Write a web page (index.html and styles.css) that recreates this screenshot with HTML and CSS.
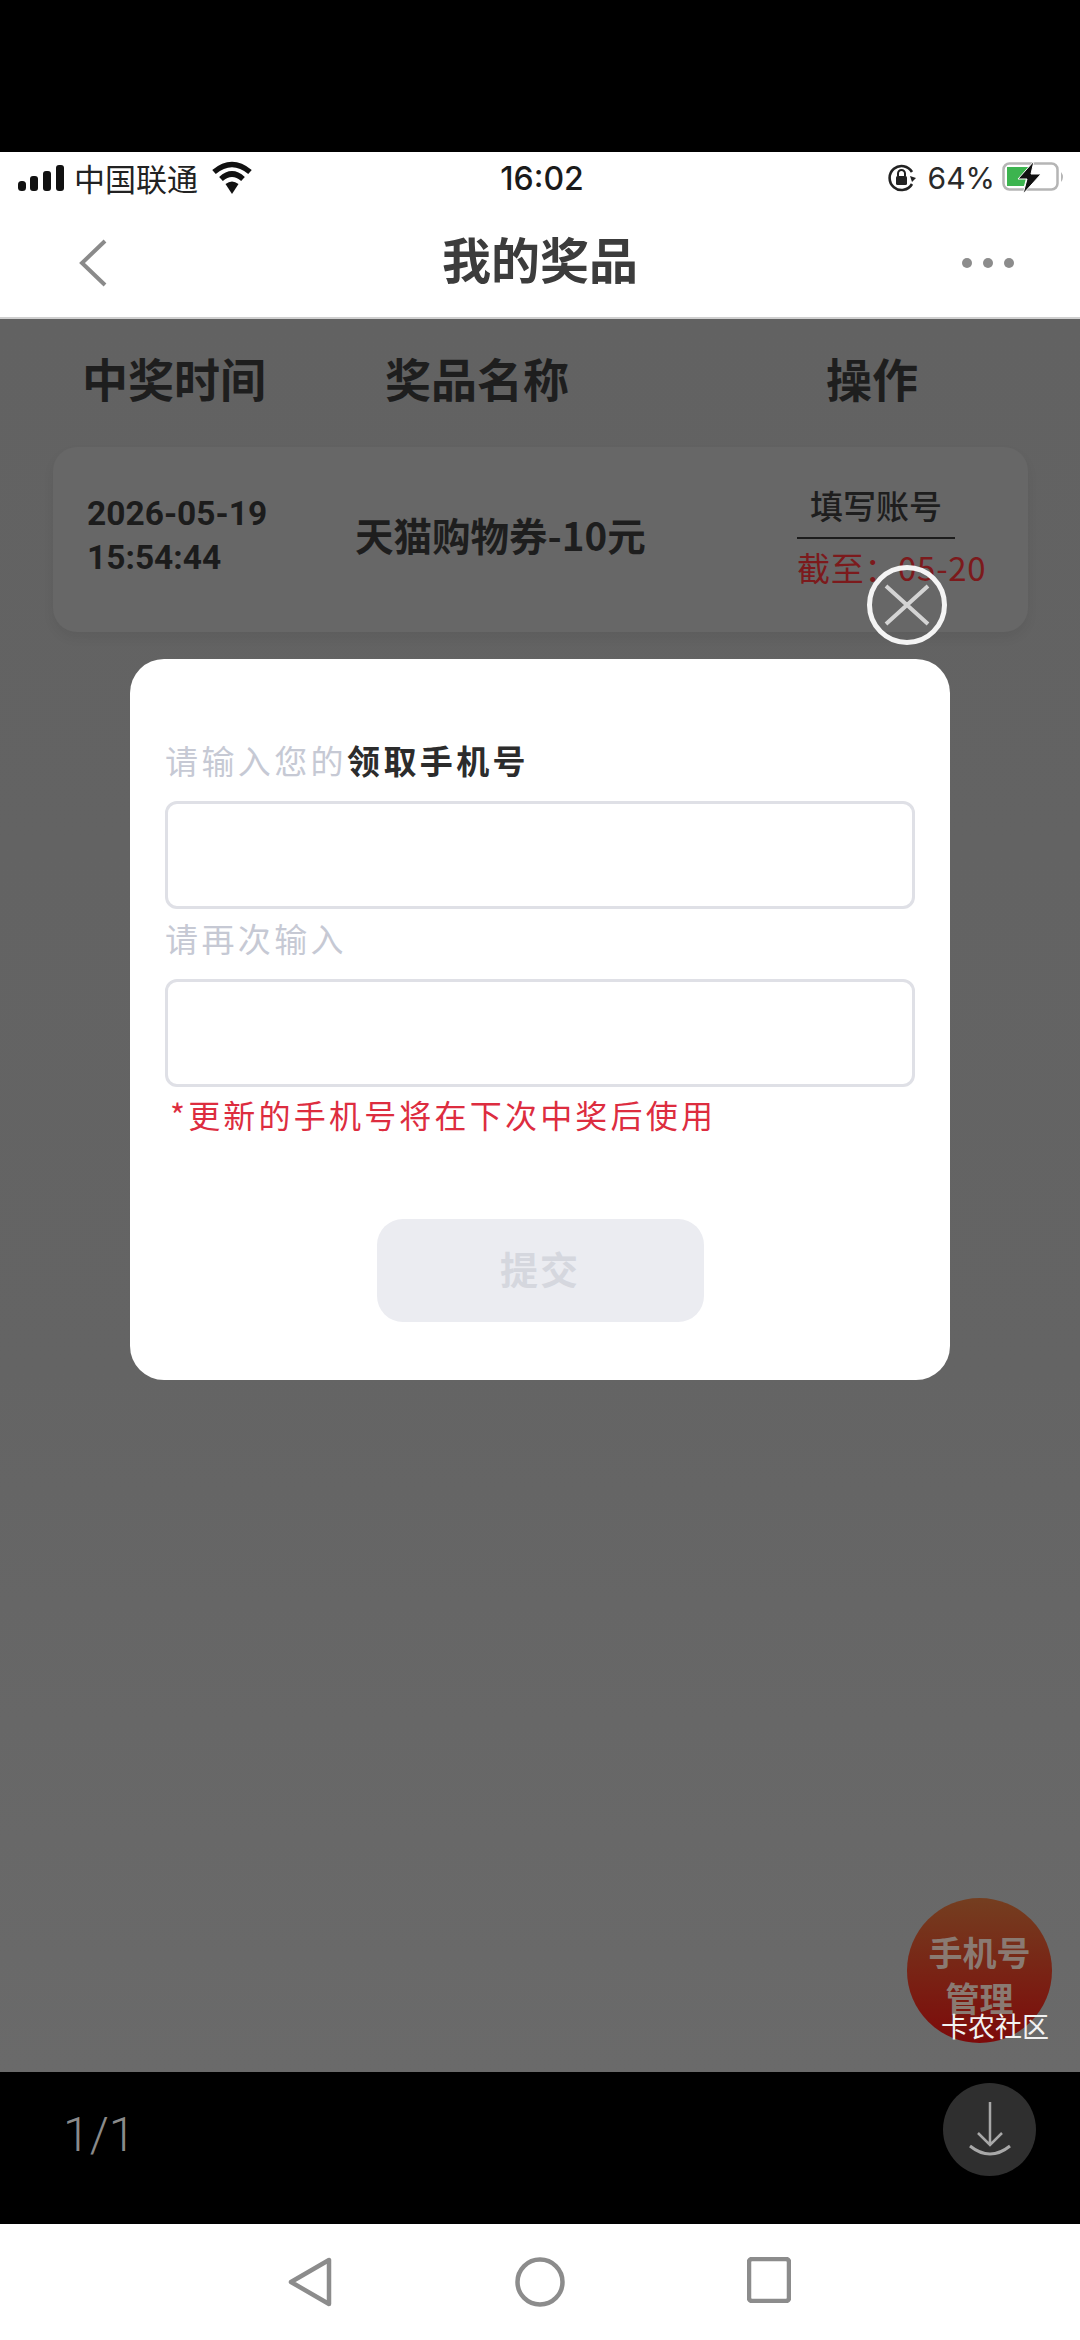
FILE: index.html
```html
<!DOCTYPE html>
<html>
	<head>
		<meta charset="UTF-8">
		<title>我的奖品</title>
		<link rel="stylesheet" href="styles.css">
	</head>
	<body>
		<div class="top_black"></div>

		<div class="status">
			<div class="status_left">
				<svg class="signal" width="46" height="26" viewBox="0 0 46 26">
					<rect x="0" y="16" width="8" height="10" rx="3.5" fill="#111"/>
					<rect x="12" y="11" width="8" height="15" rx="3" fill="#111"/>
					<rect x="25" y="6" width="8" height="20" rx="3" fill="#111"/>
					<rect x="38" y="0" width="8" height="26" rx="3" fill="#111"/>
				</svg>
				<span class="carrier">中国联通</span>
				<svg class="wifi" width="40" height="34" viewBox="0 0 40 34">
					<path d="M2 11 Q20 -4 38 11" fill="none" stroke="#111" stroke-width="5.5"/>
					<path d="M9 18 Q20 8 31 18" fill="none" stroke="#111" stroke-width="5.5"/>
					<path d="M13.5 23 Q20 18 26.500 23 L20 33 Z" fill="#111"/>
				</svg>
			</div>
			<div class="time">16:02</div>
			<div class="status_right">
				<svg class="lock" width="30" height="30" viewBox="0 0 30 30">
					<path d="M25 21 A12 12 0 1 1 25 9" fill="none" stroke="#222" stroke-width="2.6"/>
					<path d="M23 13 L29 15 L25 19 Z" fill="#222"/>
					<rect x="9" y="13" width="11" height="9" rx="1.500" fill="#222"/>
					<path d="M11 13 V10.500 A3.500 3.500 0 0 1 18 10.500 V13" fill="none" stroke="#222" stroke-width="2"/>
				</svg>
				<span class="percent">64%</span>
				<svg class="battery" width="64" height="34" viewBox="0 0 64 34">
					<rect x="1.500" y="2.500" width="54" height="26" rx="6" fill="#fff" stroke="#b5b5b5" stroke-width="2.500"/>
					<path d="M5 6 H27 L22 25 H5 Z" fill="#3cb44f"/>
					<path d="M59 11 Q63 16 59 21 Z" fill="#b5b5b5"/>
					<path d="M32 0 L16 18 H25 L21 33 L39 13 H29 Z" fill="#111" stroke="#fff" stroke-width="1"/>
				</svg>
			</div>
		</div>

		<div class="nav">
			<svg class="nav_back" width="30" height="48" viewBox="0 0 30 48">
				<path d="M27 2 L4 24 L27 46" fill="none" stroke="#8a8a8a" stroke-width="4"/>
			</svg>
			<div class="nav_title">我的奖品</div>
			<svg class="nav_more" width="54" height="12" viewBox="0 0 54 12">
				<circle cx="6" cy="6" r="5" fill="#8c8c8c"/>
				<circle cx="27" cy="6" r="5" fill="#8c8c8c"/>
				<circle cx="48" cy="6" r="5" fill="#8c8c8c"/>
			</svg>
		</div>

		<div class="page">
			<div class="table_head">
				<div>中奖时间</div>
				<div>奖品名称</div>
				<div>操作</div>
			</div>

			<div class="card">
				<div class="card_time">2026-05-19<br>15:54:44</div>
				<div class="card_name">天猫购物券-10元</div>
				<div class="card_op">
					<div class="fill_btn">填写账号</div>
					<div class="deadline">截至：05-20</div>
				</div>
			</div>

			<div class="float_btn">手机号<br>管理</div>
			<div class="watermark">卡农社区</div>

			<svg class="close_btn" width="82" height="82" viewBox="0 0 82 82">
				<circle cx="41" cy="41" r="37.500" fill="none" stroke="#f4f4f4" stroke-width="5"/>
				<path d="M20 22 L62 60 M62 22 L20 60" stroke="#d4d4d4" stroke-width="4"/>
			</svg>

			<div class="dialog">
				<div class="field_label">请输入您的<b>领取手机号</b></div>
				<div class="field_input"></div>
				<div class="field_label second">请再次输入</div>
				<div class="field_input"></div>
				<div class="field_tip">*更新的手机号将在下次中奖后使用</div>
				<div class="submit_btn">提交</div>
			</div>
		</div>

		<div class="viewer_bar">
			<div class="pager">1/1</div>
			<div class="download">
				<svg width="46" height="60" viewBox="0 0 46 60">
					<path d="M23 2 V44 M11 33 L23 45 L35 33" fill="none" stroke="#a8a8a8" stroke-width="2.500"/>
					<path d="M3 46 Q23 62 43 46" fill="none" stroke="#a8a8a8" stroke-width="3"/>
				</svg>
			</div>
		</div>

		<div class="sys_nav">
			<svg width="44" height="50" viewBox="0 0 44 50">
				<path d="M41 3 V47 L3 25 Z" fill="none" stroke="#8c8c8c" stroke-width="4.500" stroke-linejoin="round"/>
			</svg>
			<svg width="50" height="50" viewBox="0 0 50 50">
				<circle cx="25" cy="25" r="22.500" fill="none" stroke="#8c8c8c" stroke-width="4.500"/>
			</svg>
			<svg width="44" height="46" viewBox="0 0 44 46">
				<rect x="2" y="2" width="40" height="42" rx="3" fill="none" stroke="#8c8c8c" stroke-width="4.500"/>
			</svg>
		</div>
	</body>
</html>
```

FILE: styles.css
```css
* {
	margin: 0;
	padding: 0;
	box-sizing: border-box;
}
html, body {
	width: 1080px;
	height: 2340px;
	overflow: hidden;
}
body {
	display: flex;
	flex-direction: column;
	background: #fff;
	font-family: "Noto Sans CJK SC", "Liberation Sans", sans-serif;
}
.top_black {
	height: 152px;
	background: #000;
}

/* status bar */
.status {
	height: 64px;
	padding: 0 14px 12px 18px;
	display: grid;
	grid-template-columns: 1fr auto 1fr;
	align-items: center;
	background: #fff;
}
.status_left {
	display: flex;
	align-items: center;
}
.carrier {
	margin-left: 10px;
	font-size: 31px;
	line-height: 40px;
	color: #222;
}
.wifi {
	margin-left: 14px;
}
.time {
	font-family: Inter, sans-serif;
	font-size: 32px;
	font-weight: 500;
	color: #1a1a1a;
}
.status_right {
	display: flex;
	align-items: center;
	justify-content: flex-end;
}
.percent {
	margin-left: 11px;
	font-family: Inter, sans-serif;
	font-size: 30px;
	color: #2a2a2a;
}
.battery {
	margin-left: 7px;
}

/* title bar */
.nav {
	height: 103px;
	padding: 0 65px 8px;
	display: grid;
	grid-template-columns: 1fr auto 1fr;
	align-items: center;
	background: #fff;
	border-bottom: 2px solid #cfcfcf;
}
.nav_back {
	margin-left: 13px;
}
.nav_title {
	margin-bottom: 9px;
	font-size: 49px;
	font-weight: 700;
	line-height: 60px;
	color: #3c3c3c;
}
.nav_more {
	justify-self: end;
}

/* dimmed page */
.page {
	position: relative;
	flex: 1;
	background: linear-gradient(#626262, #646464 60%, #6a6a6a);
}
.table_head {
	padding: 26px 0 0 82px;
	display: grid;
	grid-template-columns: 303px 441px auto;
	font-size: 46px;
	font-weight: 700;
	line-height: 64px;
	color: #1e1e1e;
}
.card {
	margin: 38px 52px 0 53px;
	height: 185px;
	padding-left: 34px;
	display: grid;
	grid-template-columns: 268px 442px auto;
	align-items: center;
	background: #676767;
	border-radius: 24px;
	box-shadow: 0 6px 12px rgba(0, 0, 0, 0.06);
}
.card_time {
	margin-bottom: 8px;
	font-family: Roboto, sans-serif;
	font-size: 33.500px;
	font-weight: 700;
	line-height: 44px;
	color: #1c1c1c;
}
.card_name {
	margin-bottom: 12px;
	font-size: 38.500px;
	font-weight: 700;
	line-height: 50px;
	white-space: nowrap;
	color: #1e1e1e;
}
.card_op {
	align-self: start;
	padding-top: 42px;
	width: 190px;
}
.fill_btn {
	width: 158px;
	height: 50px;
	font-size: 33px;
	font-weight: 500;
	line-height: 32px;
	text-align: center;
	color: #1e1e1e;
	border-bottom: 2px solid #1c1c1c;
}
.deadline {
	margin-top: 6px;
	font-size: 33px;
	line-height: 44px;
	letter-spacing: 0.700px;
	white-space: nowrap;
	color: #7c1a1c;
}

/* modal */
.close_btn {
	position: absolute;
	left: 866px;
	top: 245px;
}
.dialog {
	position: absolute;
	left: 130px;
	top: 340px;
	width: 820px;
	height: 721px;
	padding: 77px 35px 0;
	background: #fff;
	border-radius: 34px;
}
.field_label {
	height: 65px;
	font-size: 33px;
	line-height: 48px;
	letter-spacing: 3.400px;
	color: #c6c9d4;
}
.field_label b {
	font-weight: 700;
	color: #2c2c2c;
}
.field_label.second {
	height: 70px;
	line-height: 59px;
}
.field_input {
	height: 108px;
	background: #fff;
	border: 3px solid #dfe0e6;
	border-radius: 12px;
}
.field_tip {
	margin-top: 5px;
	padding-left: 5px;
	font-size: 32px;
	line-height: 44px;
	letter-spacing: 3.200px;
	color: #dd2d3f;
}
.submit_btn {
	margin: 83px auto 0;
	width: 327px;
	height: 103px;
	background: #ebecf1;
	border-radius: 26px;
	font-size: 38px;
	font-weight: 700;
	line-height: 97px;
	letter-spacing: 2px;
	text-align: center;
	color: #d5d7de;
}

/* floating button */
.float_btn {
	position: absolute;
	left: 907px;
	top: 1579px;
	width: 145px;
	height: 145px;
	padding-top: 31px;
	border-radius: 50%;
	background: linear-gradient(#743e20, #7d0a0a);
	font-size: 34px;
	font-weight: 700;
	line-height: 46px;
	text-align: center;
	color: #8a7a72;
}
.watermark {
	position: absolute;
	left: 941px;
	top: 1689px;
	font-size: 27px;
	line-height: 36px;
	color: #f2f2f2;
}

/* image viewer bar */
.viewer_bar {
	height: 152px;
	padding: 11px 44px 0 63px;
	display: flex;
	justify-content: space-between;
	background: #000;
}
.pager {
	margin-top: 22px;
	font-family: Roboto, sans-serif;
	font-size: 48px;
	font-weight: 300;
	line-height: 60px;
	color: #8a8a8a;
}
.download {
	width: 93px;
	height: 93px;
	padding-top: 17px;
	display: flex;
	justify-content: center;
	align-items: flex-start;
	border-radius: 50%;
	background: #2f2f2f;
}

/* android nav */
.sys_nav {
	height: 116px;
	padding: 33px 289px 0 288px;
	display: flex;
	justify-content: space-between;
	align-items: flex-start;
	background: #fff;
}
```
